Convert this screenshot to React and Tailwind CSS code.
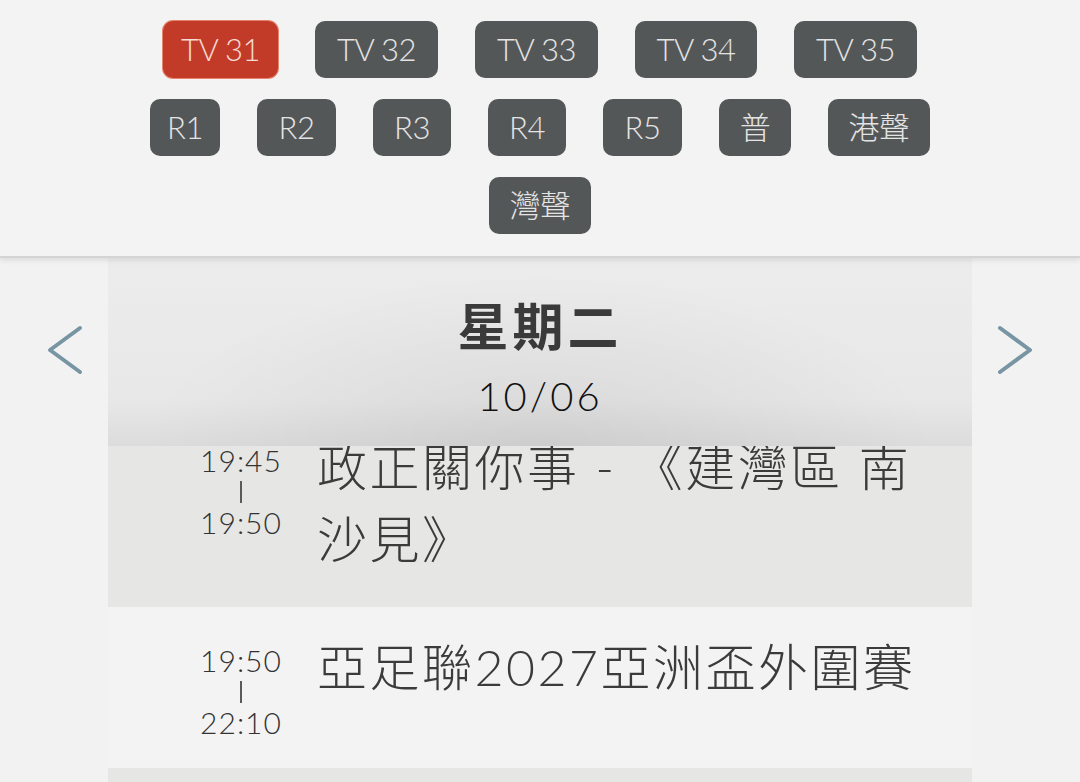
import React from "react";

const rowA = [
  { t: "TV 31", w: "w-[115px]", active: true },
  { t: "TV 32", w: "w-[123px]" },
  { t: "TV 33", w: "w-[123px]" },
  { t: "TV 34", w: "w-[122px]" },
  { t: "TV 35", w: "w-[123px]" },
  { t: "R1", w: "w-[70px]" },
  { t: "R2", w: "w-[79px]" },
  { t: "R3", w: "w-[78px]" },
  { t: "R4", w: "w-[78px]" },
  { t: "R5", w: "w-[79px]" },
  { t: "普", w: "w-[72px]" },
  { t: "港聲", w: "w-[102px]" },
  { t: "灣聲", w: "w-[102px]" },
];

const latin = { fontFamily: "Lato, 'Noto Sans CJK TC', sans-serif" };

function Chevron({ dir }) {
  const pts = dir === "left" ? "33,3 3,25 33,47" : "3,3 33,25 3,47";
  return (
    <svg width="36" height="50" viewBox="0 0 36 50" className="-mt-[4px]">
      <polyline
        points={pts}
        fill="none"
        stroke="#7895a3"
        strokeWidth="4"
        strokeLinecap="round"
        strokeLinejoin="round"
      />
    </svg>
  );
}

function Time({ a, b }) {
  return (
    <div className="w-[100px] mt-[14px] flex flex-col items-center text-[30px] leading-[31px] font-light tracking-[1px] text-[#333333]">
      <span>{a}</span>
      <span className="h-[31px] flex items-center">
        <span className="block w-[2px] h-[22px] bg-[#5a5a5a]" />
      </span>
      <span>{b}</span>
    </div>
  );
}

export default function App() {
  return (
    <div className="w-[1080px] h-[782px] overflow-hidden bg-[#f2f2f2]" style={latin}>
      {/* channel selector */}
      <div className="relative z-10 h-[258px] bg-[#f3f3f3] border-b-2 border-[#d4d4d4] shadow-[0_2px_6px_rgba(0,0,0,0.10)] pt-[21px]">
        <div className="w-[820px] mx-auto flex flex-wrap justify-center gap-x-[37px] gap-y-[21px]">
          {rowA.map((b) => (
            <div
              key={b.t}
              className={`${b.w} h-[57px] rounded-[10px] flex items-center justify-center text-[31px] font-light tracking-[-0.5px] ${
                b.active
                  ? "bg-[#c23b28] text-[#f6dcd4] ring-1 ring-[#e6836f]"
                  : "bg-[#545758] text-[#e4e4e4]"
              }`}
            >
              {b.t}
            </div>
          ))}
        </div>
      </div>

      {/* day header with arrows */}
      <div className="flex items-center">
        <div className="w-[108px] flex justify-end pr-[25px]">
          <Chevron dir="left" />
        </div>
        <div className="relative w-[864px] h-[188px] bg-gradient-to-b from-[#ececec] via-[#e8e8e8] via-75% to-[#dcdcdc] flex flex-col items-center pt-[36px]">
          <div className="absolute inset-0 bg-[radial-gradient(ellipse_at_bottom,rgba(0,0,0,0.07)_0%,rgba(0,0,0,0)_65%)]" />
          <div
            className="relative text-[51px] leading-[60px] font-bold tracking-[4px] text-[#3a3a3a]"
            style={{ fontFamily: "'Noto Sans CJK TC', sans-serif" }}
          >
            星期二
          </div>
          <div className="relative mt-[18px] text-[40px] leading-[48px] font-light tracking-[3px] text-[#111111]">
            10/06
          </div>
        </div>
        <div className="w-[108px] flex justify-start pl-[25px]">
          <Chevron dir="right" />
        </div>
      </div>

      {/* programme list */}
      <div className="mx-[108px]">
        <div className="h-[161px] overflow-hidden bg-[#e6e6e4]">
          <div className="-mt-[39px] flex pt-[24px] pl-[83px] pr-[34px] gap-[26px]">
            <Time a="19:45" b="19:50" />
            <div className="flex-1 text-[50px] leading-[72px] font-light tracking-[2.5px] text-[#3b3b3b]">
              政正關你事 - 《建灣區 南沙見》
            </div>
          </div>
        </div>
        <div className="h-[161px] bg-[#f3f3f3] flex pt-[24px] pl-[83px] pr-[34px] gap-[26px]">
          <Time a="19:50" b="22:10" />
          <div className="flex-1 text-[50px] leading-[72px] font-light tracking-[2.5px] text-[#3b3b3b]">
            亞足聯2027亞洲盃外圍賽
          </div>
        </div>
        <div className="h-[161px] bg-[#e6e6e4]" />
      </div>
    </div>
  );
}
